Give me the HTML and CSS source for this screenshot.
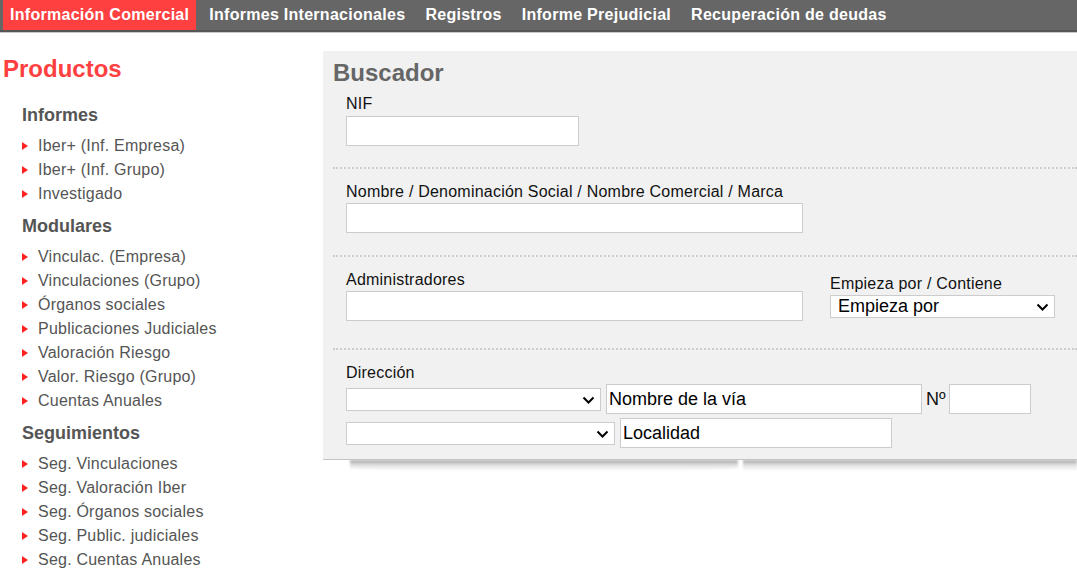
FILE: index.html
```html
<!DOCTYPE html>
<html lang="es">
<head>
  <meta charset="UTF-8">
  <meta name="viewport" content="width=device-width, initial-scale=1.0">
  <title>Buscador - Información Comercial</title>
  <link rel="stylesheet" href="styles.css">
</head>
<body>
  <nav class="topnav">
    <a href="#" class="active">Información Comercial</a>
    <a href="#">Informes Internacionales</a>
    <a href="#">Registros</a>
    <a href="#">Informe Prejudicial</a>
    <a href="#">Recuperación de deudas</a>
  </nav>

  <div class="main">
    <aside class="sidebar">
      <h2>Productos</h2>

      <h3 class="first">Informes</h3>
      <ul>
        <li>Iber+ (Inf. Empresa)</li>
        <li>Iber+ (Inf. Grupo)</li>
        <li>Investigado</li>
      </ul>

      <h3>Modulares</h3>
      <ul>
        <li>Vinculac. (Empresa)</li>
        <li>Vinculaciones (Grupo)</li>
        <li>Órganos sociales</li>
        <li>Publicaciones Judiciales</li>
        <li>Valoración Riesgo</li>
        <li>Valor. Riesgo (Grupo)</li>
        <li>Cuentas Anuales</li>
      </ul>

      <h3>Seguimientos</h3>
      <ul>
        <li>Seg. Vinculaciones</li>
        <li>Seg. Valoración Iber</li>
        <li>Seg. Órganos sociales</li>
        <li>Seg. Public. judiciales</li>
        <li>Seg. Cuentas Anuales</li>
      </ul>
    </aside>

    <div class="content">
      <div class="panel">
        <h2>Buscador</h2>

        <div class="group group-nif">
          <label for="nif">NIF</label>
          <input type="text" id="nif" class="input-nif">
        </div>

        <div class="group">
          <label for="nombre">Nombre / Denominación Social / Nombre Comercial / Marca</label>
          <input type="text" id="nombre" class="input-wide">
        </div>

        <div class="group group-admin">
          <div class="col">
            <label for="admin">Administradores</label>
            <input type="text" id="admin" class="input-wide">
          </div>
          <div class="col">
            <label for="modo">Empieza por / Contiene</label>
            <div class="select-wrap">
              <select id="modo" class="select-modo">
                <option>Empieza por</option>
                <option>Contiene</option>
              </select>
              <svg class="chevron" width="13" height="8" viewBox="0 0 13 8"><path d="M1.5 1.5 L6.5 6.5 L11.5 1.5" fill="none" stroke="#000" stroke-width="2"/></svg>
            </div>
          </div>
        </div>

        <div class="group group-dir">
          <label>Dirección</label>
          <div class="rows">
            <div class="row">
              <div class="select-wrap">
                <select class="select-via"><option></option></select>
                <svg class="chevron" width="13" height="8" viewBox="0 0 13 8"><path d="M1.5 1.5 L6.5 6.5 L11.5 1.5" fill="none" stroke="#000" stroke-width="2"/></svg>
              </div>
              <input type="text" class="input-via" value="Nombre de la vía">
              <span class="num-label">Nº</span>
              <input type="text" class="input-num">
            </div>
            <div class="row">
              <div class="select-wrap">
                <select class="select-prov"><option></option></select>
                <svg class="chevron" width="13" height="8" viewBox="0 0 13 8"><path d="M1.5 1.5 L6.5 6.5 L11.5 1.5" fill="none" stroke="#000" stroke-width="2"/></svg>
              </div>
              <input type="text" class="input-loc" value="Localidad">
            </div>
          </div>
        </div>
      </div>
      <div class="shadows">
        <div class="shadow left"></div>
        <div class="shadow right"></div>
      </div>
    </div>
  </div>
</body>
</html>
```

FILE: styles.css
```css
body {
  margin: 0;
  font-family: "Liberation Sans", Arial, sans-serif;
  background-color: #fff;
  color: #555;
}

/* top navigation */
.topnav {
  display: flex;
  height: 30px;
  padding-left: 3px;
  background-color: #666;
  border-bottom: 2px solid #555;
  box-shadow: 0 1px 0 #c8c8c8;
}
.topnav a {
  padding: 0 7px;
  margin-right: 6px;
  line-height: 30px;
  font-size: 16px;
  font-weight: bold;
  letter-spacing: 0.28px;
  color: #fff;
  text-decoration: none;
  white-space: nowrap;
}
.topnav a.active {
  background-color: #ff4040;
}

.main {
  display: flex;
  align-items: flex-start;
}

/* sidebar */
.sidebar {
  flex: none;
  width: 320px;
  padding-left: 3px;
}
.sidebar h2 {
  margin: 23px 0 0;
  font-size: 24px;
  line-height: 28px;
  color: #ff4040;
}
.sidebar h3 {
  margin: 8px 0 7px 19px;
  font-size: 18px;
  line-height: 24px;
  color: #555;
}
.sidebar h3.first {
  margin-top: 20px;
}
.sidebar ul {
  margin: 0 0 0 19px;
  padding: 0;
  list-style: none;
}
.sidebar li {
  display: flex;
  align-items: center;
  font-size: 16px;
  line-height: 24px;
  letter-spacing: 0.22px;
  color: #555;
}
.sidebar li::before {
  content: "";
  flex: none;
  margin: 0 10px 1px 0;
  border-left: 6px solid #f22;
  border-top: 4.5px solid transparent;
  border-bottom: 4.5px solid transparent;
}

/* search panel */
.content {
  flex: 1;
  margin-top: 19px;
}
.panel {
  padding: 8px 0 11px 10px;
  background-color: #f1f1f1;
  border-bottom: 1px solid #c4c4c4;
}
.panel h2 {
  margin: 0;
  font-size: 24px;
  line-height: 28px;
  color: #666;
}
.group {
  padding: 14px 0 22px 13px;
  border-bottom: 2px dotted #cdcdcd;
}
.group-nif {
  padding-top: 8px;
  padding-bottom: 21px;
}
.group-admin {
  display: flex;
  align-items: center;
  gap: 27px;
  padding-bottom: 27px;
}
.group-dir {
  padding-bottom: 0;
  border-bottom: none;
}
.group label {
  display: block;
  margin-bottom: 2px;
  font-size: 16px;
  line-height: 18px;
  letter-spacing: 0.22px;
  color: #111;
}
.group-nif label {
  margin-bottom: 3px;
}

input, select {
  box-sizing: border-box;
  margin: 0;
  font-family: "Liberation Sans", Arial, sans-serif;
  font-size: 18px;
  color: #000;
  background-color: #fff;
  border: 1px solid #ccc;
  border-radius: 0;
  outline: none;
}
input {
  height: 30px;
  padding: 0 2px;
}
select {
  display: block;
  height: 23px;
  padding: 0 24px 0 7px;
  appearance: none;
  -webkit-appearance: none;
}
.select-wrap {
  position: relative;
}
.chevron {
  position: absolute;
  right: 6px;
  top: 8px;
  pointer-events: none;
}
.input-nif { width: 233px; }
.input-wide { width: 457px; }
.select-modo { width: 225px; }

.rows {
  display: flex;
  flex-direction: column;
  gap: 4px;
}
.row {
  display: flex;
  align-items: center;
  gap: 5px;
}
.select-via { width: 255px; }
.input-via { width: 316px; }
.num-label {
  margin-left: -1px;
  font-size: 18px;
  color: #111;
}
.input-num { width: 82px; margin-left: -2px; }
.select-prov { width: 269px; }
.input-loc { width: 272px; }

/* curled paper shadows below the panel */
.shadows {
  display: flex;
  gap: 5px;
  padding-left: 27px;
  overflow: hidden;
}
.shadow {
  height: 11px;
  background: linear-gradient(to bottom, rgba(0, 0, 0, 0.36), rgba(0, 0, 0, 0.12) 45%, rgba(0, 0, 0, 0));
  filter: blur(1px);
}
.shadow.left {
  width: 388px;
  border-radius: 0 0 30% 30%;
}
.shadow.right {
  flex: 1;
}
```
